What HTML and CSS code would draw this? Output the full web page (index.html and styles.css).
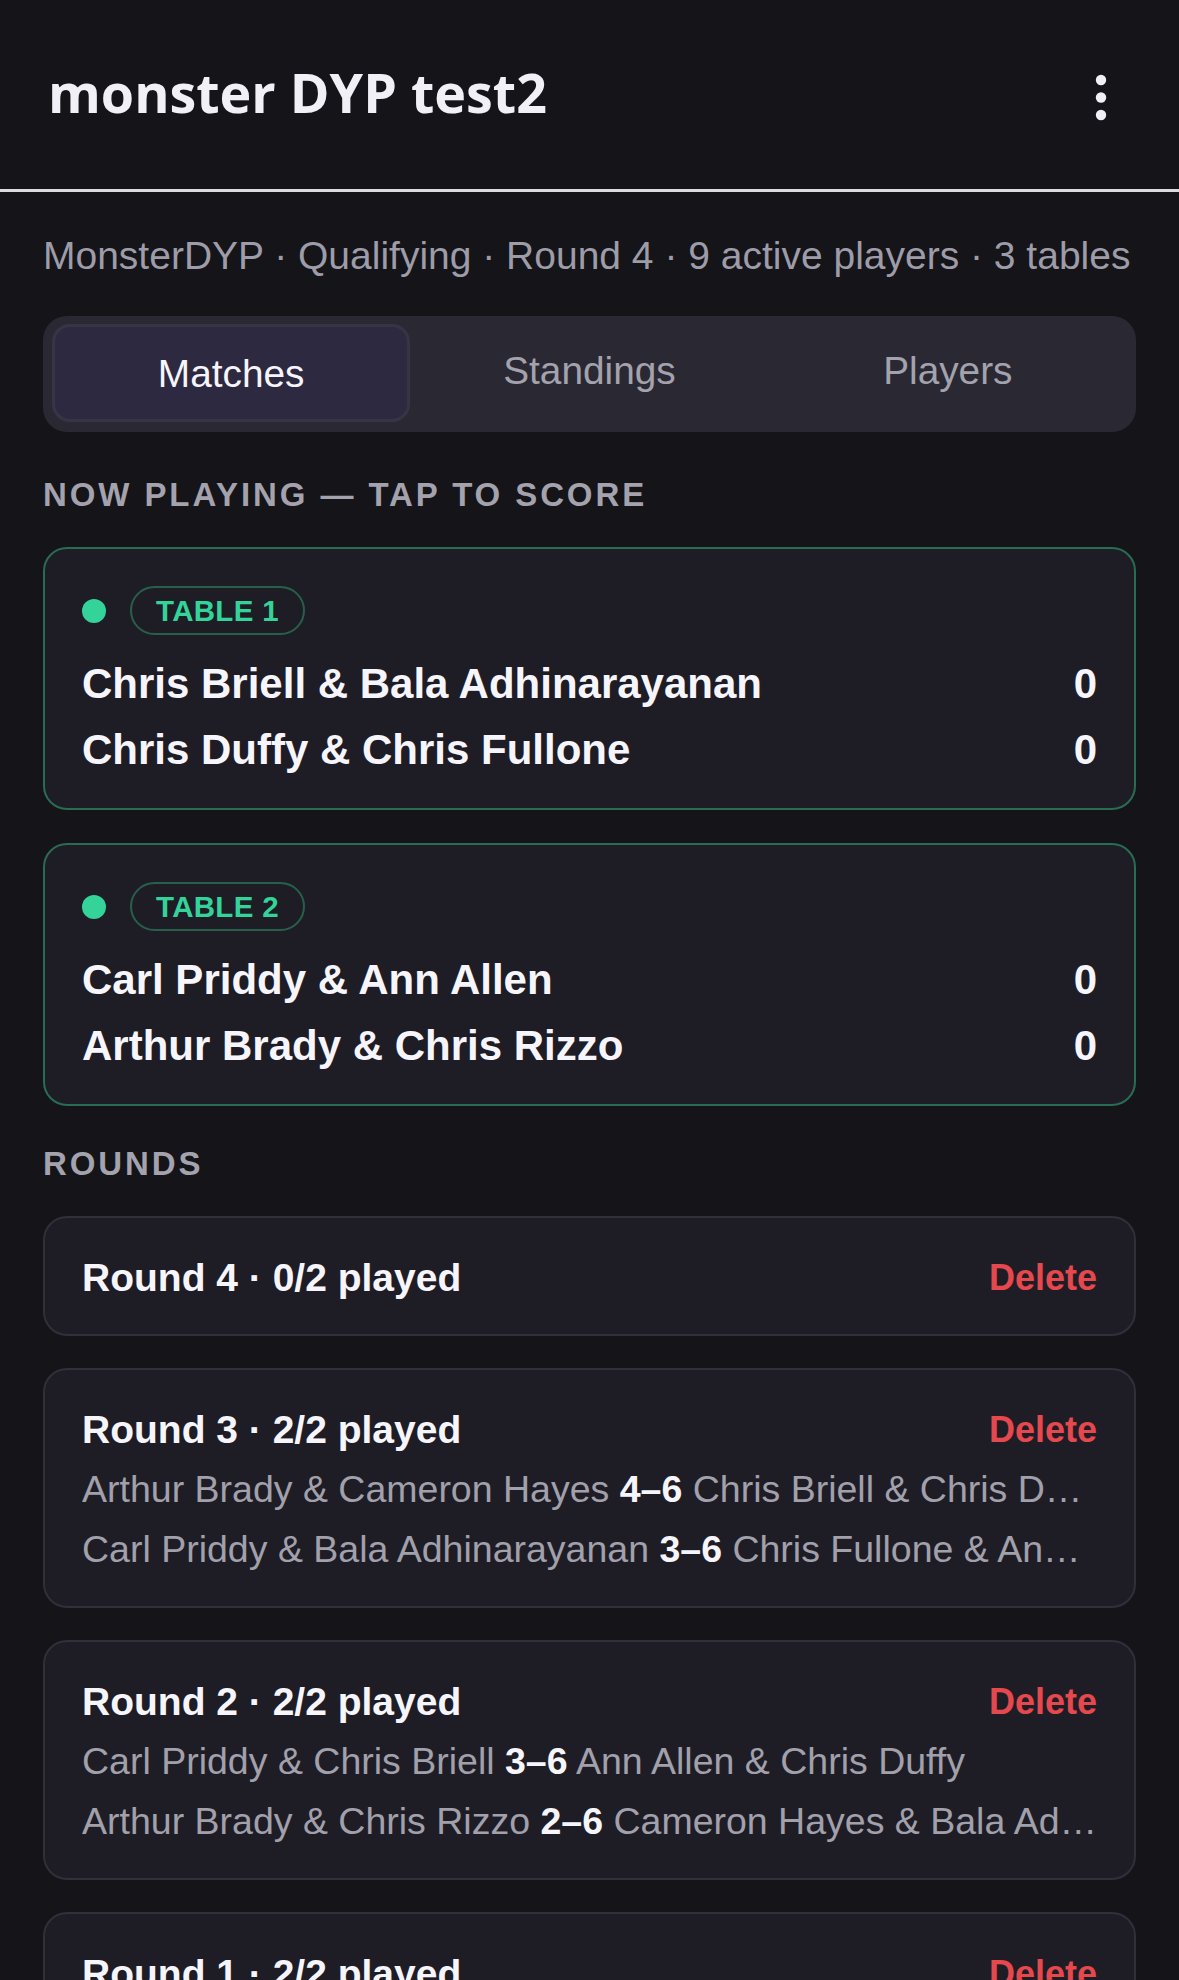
FILE: index.html
```html
<!DOCTYPE html>
<html lang="en">
<head>
<meta charset="utf-8">
<title>monster DYP test2</title>
<link rel="stylesheet" href="styles.css">
</head>
<body>
<header class="topbar">
  <h1 class="title">monster DYP test2</h1>
  <button class="kebab" aria-label="More">
    <svg width="12" height="48" viewBox="0 0 12 48"><circle cx="6" cy="6" r="5.2" fill="#f1f0f6"/><circle cx="6" cy="23.5" r="5.2" fill="#f1f0f6"/><circle cx="6" cy="41" r="5.2" fill="#f1f0f6"/></svg>
  </button>
</header>
<main class="content">
  <p class="meta">MonsterDYP · Qualifying · Round 4 · 9 active players · 3 tables</p>
  <nav class="tabs">
    <div class="tab active">Matches</div>
    <div class="tab">Standings</div>
    <div class="tab">Players</div>
  </nav>

  <h2 class="section-label">Now playing — tap to score</h2>
  <div class="live-card">
    <div class="live-head"><span class="dot"></span><span class="badge">TABLE 1</span></div>
    <div class="team-row"><span>Chris Briell &amp; Bala Adhinarayanan</span><span>0</span></div>
    <div class="team-row"><span>Chris Duffy &amp; Chris Fullone</span><span>0</span></div>
  </div>
  <div class="live-card">
    <div class="live-head"><span class="dot"></span><span class="badge">TABLE 2</span></div>
    <div class="team-row"><span>Carl Priddy &amp; Ann Allen</span><span>0</span></div>
    <div class="team-row"><span>Arthur Brady &amp; Chris Rizzo</span><span>0</span></div>
  </div>

  <h2 class="section-label rounds-label">Rounds</h2>
  <div class="round-card empty">
    <div class="round-head"><span>Round 4 · 0/2 played</span><span class="delete">Delete</span></div>
  </div>
  <div class="round-card">
    <div class="round-head"><span>Round 3 · 2/2 played</span><span class="delete">Delete</span></div>
    <div class="match-line">Arthur Brady &amp; Cameron Hayes <b>4–6</b> Chris Briell &amp; Chris Duffy</div>
    <div class="match-line">Carl Priddy &amp; Bala Adhinarayanan <b>3–6</b> Chris Fullone &amp; Ann Allen</div>
  </div>
  <div class="round-card">
    <div class="round-head"><span>Round 2 · 2/2 played</span><span class="delete">Delete</span></div>
    <div class="match-line">Carl Priddy &amp; Chris Briell <b>3–6</b> Ann Allen &amp; Chris Duffy</div>
    <div class="match-line">Arthur Brady &amp; Chris Rizzo <b>2–6</b> Cameron Hayes &amp; Bala Adhinarayanan</div>
  </div>
  <div class="round-card">
    <div class="round-head"><span>Round 1 · 2/2 played</span><span class="delete">Delete</span></div>
    <div class="match-line">Chris Briell &amp; Ann Allen <b>6–4</b> Carl Priddy &amp; Chris Rizzo</div>
    <div class="match-line">Cameron Hayes &amp; Chris Duffy <b>6–2</b> Arthur Brady &amp; Chris Fullone</div>
  </div>
</main>
</body>
</html>
```

FILE: styles.css
```css
* { box-sizing: border-box; }
html, body { margin: 0; padding: 0; }
body {
  background: #141419;
  color: #f1f0f6;
  font-family: "Liberation Sans", Arial, sans-serif;
}
.topbar {
  height: 192px;
  display: flex;
  align-items: center;
  justify-content: space-between;
  padding: 0 72px 3px 48px;
  border-bottom: 3px solid #dcdcdf;
}
.title {
  margin: 0;
  font-family: "Open Sans", sans-serif;
  font-weight: 700;
  font-size: 53.8px;
  line-height: 1.36;
  color: #f1f0f6;
}
.kebab {
  background: none;
  border: 0;
  padding: 0;
  display: flex;
  margin-top: 9px;
}
.content { padding: 0 43px 40px; }
.meta {
  margin: 43px 0 0;
  font-size: 39px;
  line-height: 42px;
  color: #9d9ca8;
  white-space: nowrap;
}
.tabs {
  margin-top: 39px;
  background: #2a2933;
  border-radius: 24px;
  padding: 8px 9px 10px;
  display: grid;
  grid-template-columns: repeat(3, 1fr);
}
.tab {
  height: 98px;
  display: flex;
  align-items: center;
  justify-content: center;
  font-size: 38.8px;
  color: #a3a2ad;
  border-radius: 18px;
  padding-bottom: 4px;
}
.tab.active {
  background: #2d2940;
  border: 3px solid #373545;
  color: #f6f5fb;
  padding-bottom: 0;
  padding-top: 2px;
}
.section-label {
  margin: 43px 0 32px;
  font-size: 33px;
  line-height: 40px;
  font-weight: 700;
  text-transform: uppercase;
  letter-spacing: 2.9px;
  color: #a3a2ad;
}
.rounds-label { margin-top: 38px; }
.live-card {
  background: #1e1d26;
  border: 2.5px solid #286c53;
  border-radius: 24px;
  padding: 37px 37px 25px;
  margin-bottom: 33px;
}
.live-head {
  display: flex;
  align-items: center;
  gap: 24px;
  margin-bottom: 16px;
}
.dot {
  width: 24px;
  height: 24px;
  border-radius: 50%;
  background: #34d399;
}
.badge {
  height: 49px;
  padding: 0 24px;
  border: 2.5px solid #27604a;
  border-radius: 25px;
  display: flex;
  align-items: center;
  font-size: 29.5px;
  font-weight: 700;
  color: #34d399;
  letter-spacing: 0.3px;
}
.team-row {
  display: flex;
  justify-content: space-between;
  height: 66px;
  align-items: center;
  font-size: 42px;
  font-weight: 700;
  color: #f6f5fb;
}
.round-card {
  background: #1e1d26;
  border: 2.5px solid #302f3a;
  border-radius: 24px;
  padding: 37px 37px 27px;
  margin-bottom: 32px;
}
.round-card.empty { padding-bottom: 33px; }
.round-head {
  display: flex;
  justify-content: space-between;
  align-items: center;
  height: 46px;
  font-size: 39px;
  font-weight: 700;
  color: #f6f5fb;
}
.delete {
  font-size: 36px;
  color: #e5484d;
}
.match-line {
  height: 59.5px;
  line-height: 59.5px;
  font-size: 37.5px;
  color: #a1a0ab;
  white-space: nowrap;
  overflow: hidden;
  text-overflow: ellipsis;
  margin-right: -2px;
}
.round-head + .match-line { margin-top: 7px; }
.match-line b { color: #f6f5fb; font-weight: 700; }
```
